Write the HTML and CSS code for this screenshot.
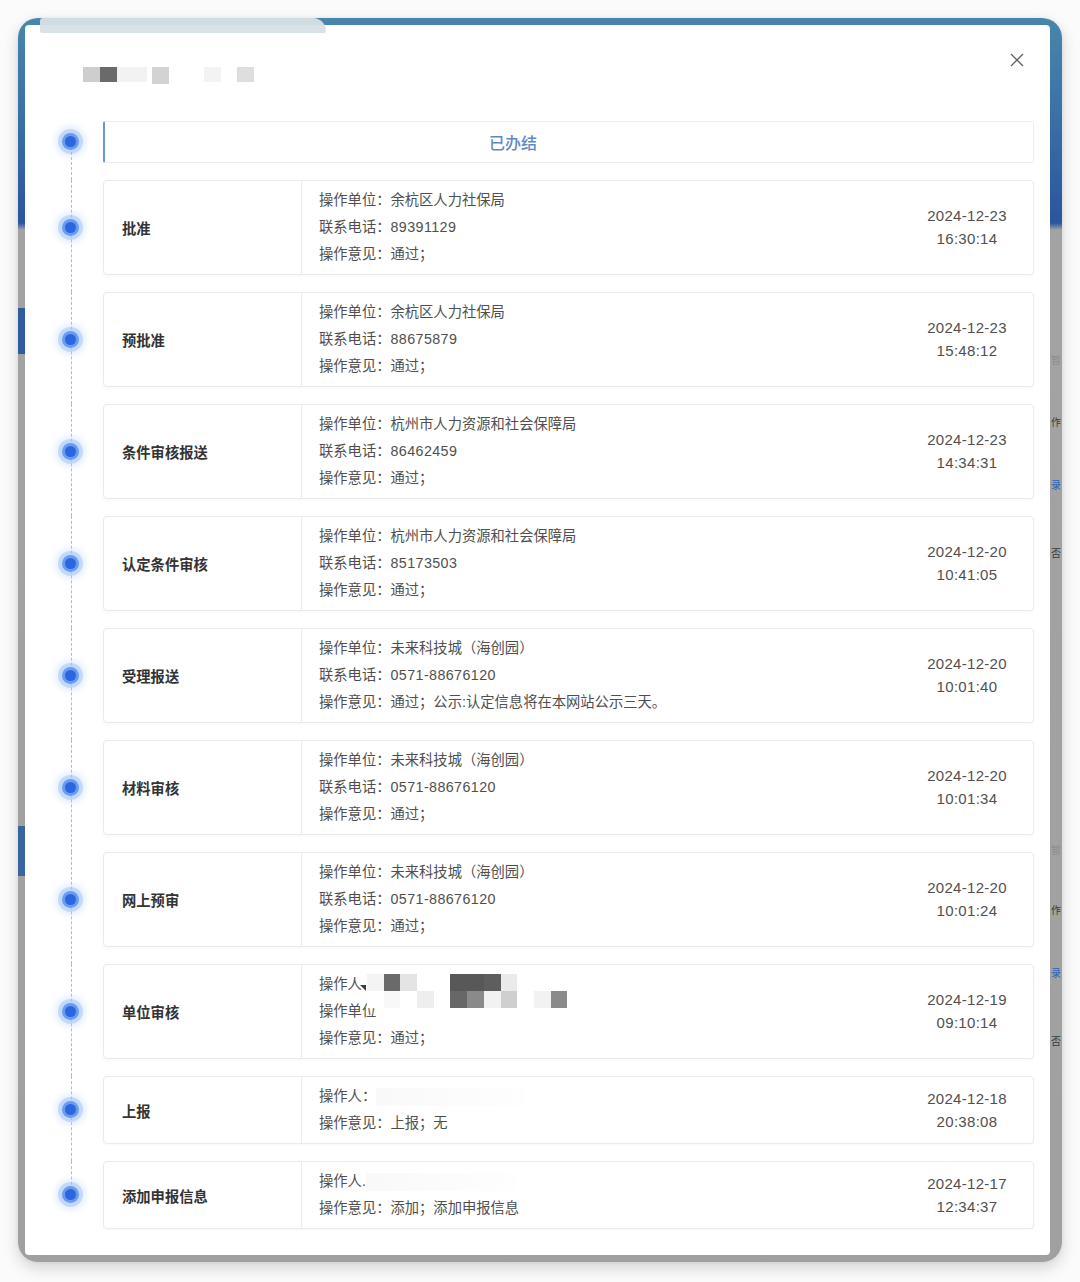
FILE: index.html
```html
<!DOCTYPE html>
<html lang="zh-CN">
<head>
<meta charset="utf-8">
<title>办理进度</title>
<link rel="stylesheet" href="styles.css">
</head>
<body>
<div class="frame">
  <div class="modal">
    <div class="header">
      <div class="title-mosaic">
        <span class="px c1"></span><span class="px c2"></span><span class="px c3 w2"></span><span class="px gap"></span><span class="px c4"></span><span class="px gap2"></span><span class="px c5"></span><span class="px gap3"></span><span class="px c6"></span>
      </div>
      <svg class="close" width="14" height="14" viewBox="0 0 14 14"><path d="M1 1L13 13M13 1L1 13" stroke="#666" stroke-width="1.4" fill="none"/></svg>
    </div>

    <div class="timeline">
      <div class="item first">
        <div class="rail"><span class="dot"></span></div>
        <div class="done">已办结</div>
      </div>

      <div class="item">
        <div class="rail"><span class="dot"></span></div>
        <div class="card">
          <div class="name">批准</div>
          <div class="info"><div>操作单位：余杭区人力社保局</div><div>联系电话：<span class="num">89391129</span></div><div>操作意见：通过；</div></div>
          <div class="time"><div>2024-12-23</div><div>16:30:14</div></div>
        </div>
      </div>

      <div class="item">
        <div class="rail"><span class="dot"></span></div>
        <div class="card">
          <div class="name">预批准</div>
          <div class="info"><div>操作单位：余杭区人力社保局</div><div>联系电话：<span class="num">88675879</span></div><div>操作意见：通过；</div></div>
          <div class="time"><div>2024-12-23</div><div>15:48:12</div></div>
        </div>
      </div>

      <div class="item">
        <div class="rail"><span class="dot"></span></div>
        <div class="card">
          <div class="name">条件审核报送</div>
          <div class="info"><div>操作单位：杭州市人力资源和社会保障局</div><div>联系电话：<span class="num">86462459</span></div><div>操作意见：通过；</div></div>
          <div class="time"><div>2024-12-23</div><div>14:34:31</div></div>
        </div>
      </div>

      <div class="item">
        <div class="rail"><span class="dot"></span></div>
        <div class="card">
          <div class="name">认定条件审核</div>
          <div class="info"><div>操作单位：杭州市人力资源和社会保障局</div><div>联系电话：<span class="num">85173503</span></div><div>操作意见：通过；</div></div>
          <div class="time"><div>2024-12-20</div><div>10:41:05</div></div>
        </div>
      </div>

      <div class="item">
        <div class="rail"><span class="dot"></span></div>
        <div class="card">
          <div class="name">受理报送</div>
          <div class="info"><div>操作单位：未来科技城（海创园）</div><div>联系电话：<span class="num">0571-88676120</span></div><div>操作意见：通过；公示:认定信息将在本网站公示三天。</div></div>
          <div class="time"><div>2024-12-20</div><div>10:01:40</div></div>
        </div>
      </div>

      <div class="item">
        <div class="rail"><span class="dot"></span></div>
        <div class="card">
          <div class="name">材料审核</div>
          <div class="info"><div>操作单位：未来科技城（海创园）</div><div>联系电话：<span class="num">0571-88676120</span></div><div>操作意见：通过；</div></div>
          <div class="time"><div>2024-12-20</div><div>10:01:34</div></div>
        </div>
      </div>

      <div class="item">
        <div class="rail"><span class="dot"></span></div>
        <div class="card">
          <div class="name">网上预审</div>
          <div class="info"><div>操作单位：未来科技城（海创园）</div><div>联系电话：<span class="num">0571-88676120</span></div><div>操作意见：通过；</div></div>
          <div class="time"><div>2024-12-20</div><div>10:01:24</div></div>
        </div>
      </div>

      <div class="item">
        <div class="rail"><span class="dot"></span></div>
        <div class="card">
          <div class="name">单位审核</div>
          <div class="info masked">
            <div>操作人<span class="tri"></span></div><div>操作单位</div><div>操作意见：通过；</div>
            <div class="mosaic">
              <span style="background:#f4f4f4"></span><span style="background:#6a6a6a"></span><span style="background:#e4e4e4"></span><span style="background:#fff"></span><span style="background:#fff"></span><span style="background:#585858"></span><span style="background:#585858"></span><span style="background:#5e5e5e"></span><span style="background:#eaeaea"></span><span style="background:#fff"></span><span style="background:#fff"></span><span style="background:#fff"></span>
              <span style="background:#fff"></span><span style="background:#f8f8f8"></span><span style="background:#fff"></span><span style="background:#eeeeee"></span><span style="background:#fff"></span><span style="background:#676767"></span><span style="background:#8a8a8a"></span><span style="background:#f2f2f2"></span><span style="background:#cfcfcf"></span><span style="background:#fff"></span><span style="background:#f2f2f2"></span><span style="background:#8a8a8a"></span>
            </div>
          </div>
          <div class="time"><div>2024-12-19</div><div>09:10:14</div></div>
        </div>
      </div>

      <div class="item">
        <div class="rail"><span class="dot"></span></div>
        <div class="card short">
          <div class="name">上报</div>
          <div class="info"><div>操作人：<span class="haze"></span></div><div>操作意见：上报；无</div></div>
          <div class="time"><div>2024-12-18</div><div>20:38:08</div></div>
        </div>
      </div>

      <div class="item last">
        <div class="rail"><span class="dot"></span></div>
        <div class="card short">
          <div class="name">添加申报信息</div>
          <div class="info"><div>操作人.<span class="haze"></span></div><div>操作意见：添加；添加申报信息</div></div>
          <div class="time"><div>2024-12-17</div><div>12:34:37</div></div>
        </div>
      </div>
    </div>
  </div>

  <div class="edge">
    <span class="frag light" style="margin-top:329px">暂</span>
    <span class="frag" style="margin-top:50px">作</span>
    <span class="frag blue" style="margin-top:51px">录</span>
    <span class="frag" style="margin-top:56px">否</span>
    <span class="frag light" style="margin-top:285px">暂</span>
    <span class="frag" style="margin-top:48px">作</span>
    <span class="frag blue" style="margin-top:51px">录</span>
    <span class="frag" style="margin-top:56px">否</span>
  </div>
</div>
</body>
</html>
```

FILE: styles.css
```css
* { box-sizing: border-box; }

html, body {
  margin: 0;
  padding: 0;
  background: #fbfbfb;
  font-family: "Liberation Sans", "Noto Sans CJK SC", sans-serif;
  color: #4e4e4e;
}

body {
  width: 1080px;
  height: 1282px;
  overflow: hidden;
  padding-top: 18px;
}

.frame {
  position: relative;
  margin: 0 18px;
  height: 1244px;
  border-radius: 20px;
  padding: 7px 0 7px 7px;
  display: flex;
  box-shadow: 0 6px 16px rgba(0, 0, 0, 0.16), 0 0 4px rgba(0, 0, 0, 0.06);
  background:
    linear-gradient(#2f5c9d, #2f5c9d) 0 290px / 8px 46px no-repeat,
    linear-gradient(#3a649f, #3a649f) 0 808px / 8px 50px no-repeat,
    linear-gradient(to bottom, #4886ab 0, #3b72a8 90px, #2b559e 205px, #a3a3a3 212px, #a0a0a0 100%);
}

.frame::before {
  content: "";
  position: absolute;
  z-index: 2;
  left: 22px;
  top: 0;
  width: 286px;
  height: 15px;
  border-radius: 10px 40px 6px 6px;
  background: #d7e2e6;
  opacity: 0.95;
}

.modal {
  position: relative;
  flex: 1;
  background: #fff;
  border-radius: 4px;
  display: flex;
  flex-direction: column;
  padding: 0 16px 25px 0;
}

.edge {
  width: 12px;
  overflow: hidden;
  display: flex;
  flex-direction: column;
  align-items: center;
  font-family: "Noto Sans CJK SC", sans-serif;
  font-size: 10px;
  line-height: 12px;
  color: #3a3a3a;
}
.frag { display: block; }
.frag.light { color: #8c8c8c; }
.frag.blue { color: #2c5fb0; }

/* header */
.header {
  height: 96px;
  display: flex;
  justify-content: space-between;
  align-items: flex-start;
  padding: 0 10px 0 58px;
}

.title-mosaic {
  display: flex;
  margin-top: 42px;
  height: 15px;
}
.px { display: block; width: 17px; height: 15px; }
.px.c1 { background: #cecece; }
.px.c2 { background: #6a6a6a; }
.px.c3 { background: #f2f2f2; }
.px.w2 { width: 30px; }
.px.gap { width: 5px; }
.px.gap2 { width: 35px; }
.px.gap3 { width: 16px; }
.px.c4 { background: #d3d3d3; height: 17px; }
.px.c5 { background: #f3f3f3; }
.px.c6 { background: #dedede; }

.close { margin-top: 28px; }

/* timeline */
.timeline {
  display: flex;
  flex-direction: column;
  gap: 17px;
}

.item {
  display: flex;
  align-items: stretch;
}

.rail {
  position: relative;
  width: 78px;
  flex: none;
  display: flex;
  align-items: center;
  padding-left: 40px;
}

.rail::before {
  content: "";
  position: absolute;
  left: 46px;
  top: 0;
  bottom: -17px;
  border-left: 1px dashed #b9b9b9;
}
.item.first .rail::before { top: 50%; }
.item.last .rail::before { bottom: 50%; }

.dot {
  position: relative;
  z-index: 1;
  width: 11px;
  height: 11px;
  margin-top: -1px;
  border-radius: 50%;
  background: #2a66df;
  box-shadow:
    0 0 0 3px #6a9bef,
    0 0 0 7px rgba(140, 180, 245, 0.4),
    0 0 6px 10px rgba(190, 215, 250, 0.4);
}

.done {
  flex: 1;
  height: 42px;
  border: 1px solid #ececec;
  border-left: 2px solid #6a97d4;
  border-radius: 2px;
  text-align: center;
  padding-right: 112px;
  line-height: 40px;
  font-family: "Noto Sans CJK SC", sans-serif;
  font-size: 16px;
  font-weight: 500;
  color: #5f89c6;
}

.card {
  flex: 1;
  display: flex;
  height: 95px;
  border: 1px solid #ebebeb;
  border-radius: 4px;
  background: #fff;
  box-shadow: 0 1px 2px rgba(0, 0, 0, 0.03);
}
.card.short { height: 68px; }

.name {
  width: 198px;
  flex: none;
  border-right: 1px solid #ececec;
  padding-left: 18px;
  display: flex;
  align-items: center;
  font-size: 14.3px;
  font-weight: bold;
  color: #333;
}

.info {
  position: relative;
  flex: 1;
  padding: 6px 17px;
  font-size: 14.3px;
  line-height: 27px;
  color: #4f4f4f;
  white-space: nowrap;
}

.num { letter-spacing: 0.4px; }

.tri {
  display: inline-block;
  width: 0;
  height: 0;
  border-top: 6px solid #3c3c3c;
  border-left: 6px solid transparent;
  vertical-align: -2px;
  margin-left: -2px;
}

.mosaic {
  position: absolute;
  left: 65px;
  top: 9px;
  display: grid;
  grid-template-columns: repeat(12, 16.7px);
  grid-template-rows: 17px 17px;
}
.mosaic span { display: block; }

.haze {
  display: inline-block;
  width: 150px;
  height: 18px;
  vertical-align: middle;
  background: linear-gradient(90deg, rgba(245,245,245,0.6), rgba(250,250,250,0.2));
}

.time {
  width: 132px;
  flex: none;
  display: flex;
  flex-direction: column;
  justify-content: center;
  align-items: center;
  font-size: 15px;
  line-height: 23px;
  letter-spacing: 0.3px;
  color: #4f4f4f;
  padding-bottom: 1px;
}
```
